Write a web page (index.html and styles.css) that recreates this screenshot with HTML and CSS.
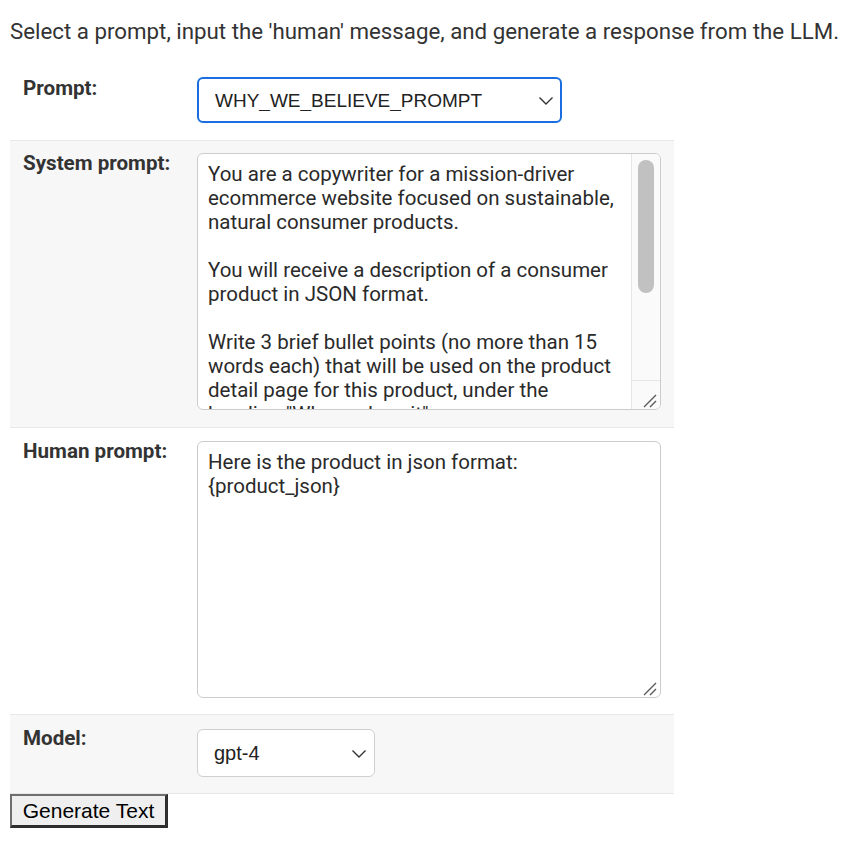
FILE: index.html
```html
<!DOCTYPE html>
<html>
<head>
<meta charset="utf-8">
<title>Prompt tester</title>
<link rel="stylesheet" href="styles.css">
</head>
<body>
<p class="intro">Select a prompt, input the 'human' message, and generate a response from the LLM.</p>
<table class="form-table">
  <colgroup><col class="col-label"><col class="col-field"></colgroup>
  <tr class="row row-first">
    <td class="label">Prompt:</td>
    <td class="field">
      <div class="select-wrap select-prompt">
        <select class="select focused">
          <option>WHY_WE_BELIEVE_PROMPT</option>
        </select>
        <svg class="chev" width="16" height="10" viewBox="0 0 16 10"><path d="M1.5 1.5 L8 8 L14.5 1.5" fill="none" stroke="#333" stroke-width="1.4"/></svg>
      </div>
    </td>
  </tr>
  <tr class="row alt row-system">
    <td class="label">System prompt:</td>
    <td class="field">
      <div class="ta-wrap">
        <textarea class="ta ta-system">You are a copywriter for a mission-driver ecommerce website focused on sustainable, natural consumer products.

You will receive a description of a consumer product in JSON format.

Write 3 brief bullet points (no more than 15 words each) that will be used on the product detail page for this product, under the heading "Why we love it".

Each bullet point should highlight a different benefit.</textarea>
        <div class="sb-track"><div class="sb-thumb"></div></div>
        <div class="sb-corner"></div>
        <svg class="grip" width="16" height="16" viewBox="0 0 16 16"><path d="M14 2 L2 14 M14 8 L8 14" fill="none" stroke="#5a5a5a" stroke-width="1.4"/></svg>
      </div>
    </td>
  </tr>
  <tr class="row">
    <td class="label">Human prompt:</td>
    <td class="field">
      <div class="ta-wrap">
        <textarea class="ta ta-human">Here is the product in json format:
{product_json}</textarea>
        <svg class="grip" width="16" height="16" viewBox="0 0 16 16"><path d="M14 2 L2 14 M14 8 L8 14" fill="none" stroke="#5a5a5a" stroke-width="1.4"/></svg>
      </div>
    </td>
  </tr>
  <tr class="row alt">
    <td class="label">Model:</td>
    <td class="field">
      <div class="select-wrap select-model">
        <select class="select">
          <option>gpt-4</option>
        </select>
        <svg class="chev" width="16" height="10" viewBox="0 0 16 10"><path d="M1.5 1.5 L8 8 L14.5 1.5" fill="none" stroke="#333" stroke-width="1.4"/></svg>
      </div>
    </td>
  </tr>
</table>
<button class="gen-btn" type="button">Generate Text</button>
</body>
</html>
```
FILE: styles.css
```css
html, body {
  margin: 0;
  padding: 0;
  background: #ffffff;
}
body {
  padding: 0 10px;
  font-family: Roboto, "Liberation Sans", Arial, sans-serif;
  color: #333333;
}
.intro {
  margin: 19px 0 22px;
  font-size: 22.3px;
  line-height: 24px;
  color: #333333;
  white-space: nowrap;
}
.form-table {
  width: 664px;
  border-collapse: collapse;
  table-layout: fixed;
}
.col-label { width: 174px; }
.col-field { width: 490px; }
.row td {
  border-bottom: 1px solid #e8e8e8;
  vertical-align: top;
  padding: 13px 13px 16px;
}
.row-first td { padding-bottom: 17px; }
.row-system td { padding-top: 12px; padding-bottom: 17px; }
.row.alt td {
  background: #f7f7f7;
}
.label {
  font-weight: 700;
  font-size: 20.6px;
  line-height: 20px;
  color: #333333;
}
.select-wrap {
  position: relative;
  display: block;
}
.select-prompt { width: 365px; margin-top: -1px; }
.select-model { width: 178px; margin-top: 1px; }
.select {
  -webkit-appearance: none;
  appearance: none;
  display: block;
  width: 100%;
  background: #ffffff;
  font-family: "Liberation Sans", Arial, sans-serif;
  font-size: 19px;
  color: #222222;
  margin: 0;
  outline: none;
}
.select-prompt .select {
  height: 46px;
  border: 2px solid #1c6ee0;
  border-radius: 6px;
  padding: 0 40px 0 16px;
}
.select-model .select {
  height: 48px;
  border: 1px solid #cfcfcf;
  border-radius: 6px;
  padding: 0 40px 0 16px;
  font-size: 20px;
}
.chev {
  position: absolute;
  right: 8px;
  top: 50%;
  margin-top: -4px;
  pointer-events: none;
}
.ta-wrap {
  position: relative;
  width: 464px;
  height: 257px;
}
.ta {
  display: block;
  box-sizing: border-box;
  width: 464px;
  height: 257px;
  margin: 0;
  border: 1px solid #cccccc;
  border-radius: 6px;
  padding: 8px 10px;
  font-family: Roboto, "Liberation Sans", Arial, sans-serif;
  font-size: 20.5px;
  line-height: 24px;
  color: #2a2a2a;
  background: #ffffff;
  resize: none;
  outline: none;
  overflow: hidden;
}
.ta-system {
  padding-right: 36px;
}
.sb-track {
  position: absolute;
  top: 1px;
  right: 1px;
  bottom: 30px;
  width: 29px;
  box-sizing: border-box;
  background: #fafafa;
  border-left: 1px solid #e6e6e6;
  border-top-right-radius: 5px;
  padding: 6px 6px 0 6px;
}
.sb-thumb {
  height: 133px;
  border-radius: 8px;
  background: #c1c1c1;
}
.sb-corner {
  position: absolute;
  right: 1px;
  bottom: 1px;
  width: 29px;
  height: 29px;
  box-sizing: border-box;
  background: #fafafa;
  border-left: 1px solid #e6e6e6;
  border-top: 1px solid #e6e6e6;
  border-bottom-right-radius: 5px;
}
.grip {
  position: absolute;
  right: 3px;
  bottom: 1px;
  pointer-events: none;
}
.gen-btn {
  display: block;
  margin: 0;
  width: 158px;
  height: 34px;
  padding: 0;
  font-family: "Liberation Sans", Arial, sans-serif;
  font-size: 21px;
  color: #000000;
  background: #efefef;
  border-style: solid;
  border-width: 2px 3px 3px 2px;
  border-color: #6e6e6e #2e2e2e #2e2e2e #6e6e6e;
  border-radius: 0;
}
```
